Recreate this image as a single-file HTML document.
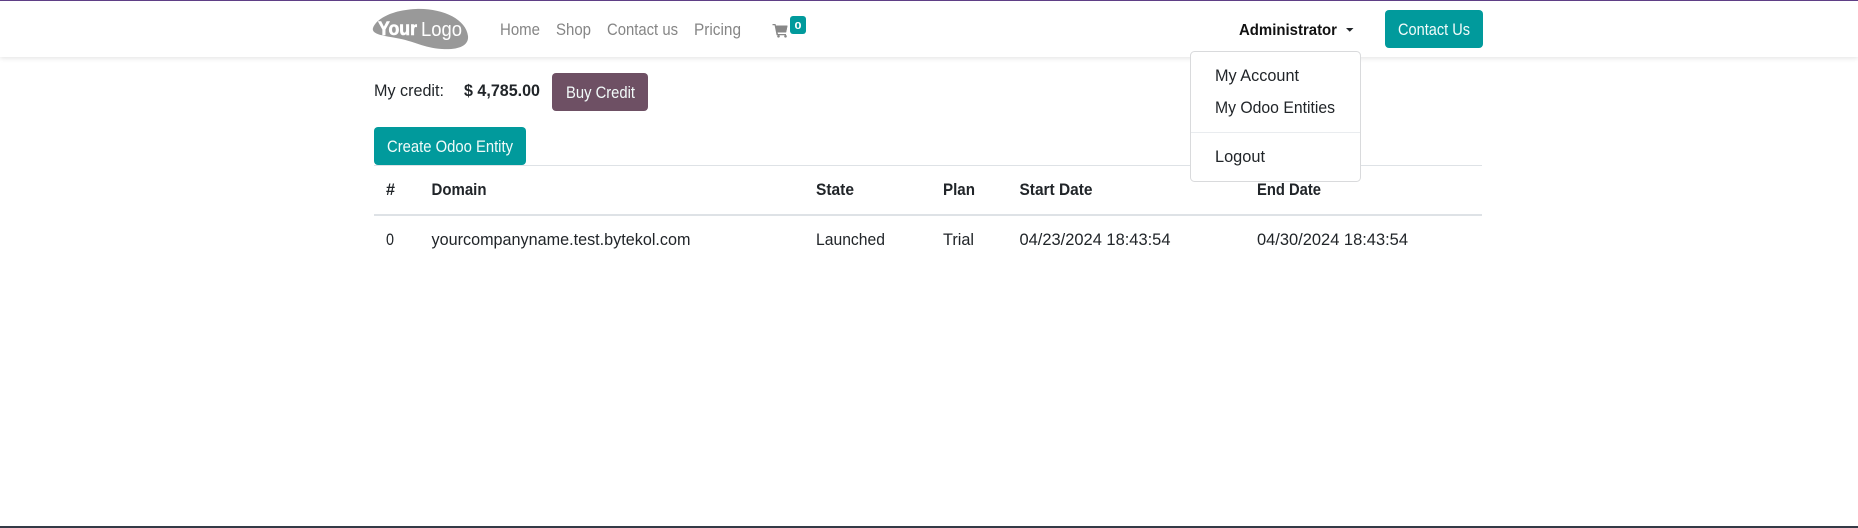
<!DOCTYPE html>
<html><head><meta charset="utf-8"><style>
html,body{margin:0;padding:0;background:#fff;width:1858px;height:528px;overflow:hidden}
svg{position:absolute;left:0;top:0;display:block}
.shadow{position:absolute;left:0;top:0;width:1858px;height:57px;background:#fff;box-shadow:0 1px 5px rgba(0,0,0,.12)}
text{font-family:"Liberation Sans",sans-serif;font-size:16.5px;fill:#212529}
.b{font-weight:700}
.n{fill:#858585;font-size:17px}
.w{fill:#f2fbfa;font-size:17px}
</style></head><body>
<div class="shadow"></div>
<svg width="1858" height="528" viewBox="0 0 1858 528" xmlns="http://www.w3.org/2000/svg">
<rect x="0" y="0" width="1858" height="1" fill="#5f3f86"/>
<rect x="0" y="526" width="1858" height="2" fill="#343a46"/>

<!-- logo -->
<path d="M373 28C376 19 392 10 416 9C442 8 466 19 468 36C469 46 458 50 442 49C424 48 414 41 396 38C384 36 371 34 373 28Z" fill="#999"/>
<text x="378" y="35" class="b" style="font-size:19px;fill:#fff;stroke:#fff;stroke-width:.6" textLength="39" lengthAdjust="spacingAndGlyphs">Your</text>
<text x="421" y="36" style="font-size:20px;fill:#fff" textLength="41" lengthAdjust="spacingAndGlyphs">Logo</text>

<!-- nav -->
<text x="500" y="35" class="n" textLength="40" lengthAdjust="spacingAndGlyphs">Home</text>
<text x="556" y="35" class="n" textLength="35" lengthAdjust="spacingAndGlyphs">Shop</text>
<text x="607" y="35" class="n" textLength="71" lengthAdjust="spacingAndGlyphs">Contact us</text>
<text x="694" y="35" class="n" textLength="47" lengthAdjust="spacingAndGlyphs">Pricing</text>
<!-- cart -->
<path d="M772.500 24h3l.6 2h11.400l-1.400 6.500h-8.500l.4 1.500h8v1.200h-9.400l-2-10h-2.100z" fill="#888"/>
<path d="M776 25.500h11.500l-1.300 6.500h-9z" fill="#888"/>
<circle cx="778.500" cy="36.300" r="1.300" fill="#888"/><circle cx="785.500" cy="36.300" r="1.300" fill="#888"/>
<rect x="790" y="16" width="16" height="18" rx="3" fill="#019a9c"/>
<text x="794.500" y="29" class="b" style="font-size:10.500px;fill:#fff" textLength="7" lengthAdjust="spacingAndGlyphs">0</text>

<!-- user -->
<text x="1239" y="35" class="b" style="font-size:15.500px;fill:#111" textLength="98" lengthAdjust="spacingAndGlyphs">Administrator</text>
<path d="M1346 28h7.500l-3.750 3.800z" fill="#212529"/>
<rect x="1385" y="10" width="98" height="38" rx="4" fill="#019a9c"/>
<text x="1398" y="35" class="w" textLength="72" lengthAdjust="spacingAndGlyphs">Contact Us</text>

<!-- credit -->
<text x="374" y="96" textLength="70" lengthAdjust="spacingAndGlyphs">My credit:</text>
<text x="464" y="96" class="b" textLength="76" lengthAdjust="spacingAndGlyphs">$ 4,785.00</text>
<rect x="552" y="73" width="96" height="38" rx="4" fill="#6e5064"/>
<text x="566" y="98" class="w" textLength="69" lengthAdjust="spacingAndGlyphs">Buy Credit</text>
<rect x="374" y="127" width="152" height="38" rx="4" fill="#019a9c"/>
<text x="387" y="152" class="w" textLength="126" lengthAdjust="spacingAndGlyphs">Create Odoo Entity</text>

<!-- table -->
<rect x="374" y="165" width="1108" height="1" fill="#dee2e6"/>
<rect x="374" y="214" width="1108" height="2" fill="#dee2e6"/>
<text x="386" y="195" class="b" textLength="9" lengthAdjust="spacingAndGlyphs">#</text>
<text x="431.500" y="195" class="b" textLength="55" lengthAdjust="spacingAndGlyphs">Domain</text>
<text x="816" y="195" class="b" textLength="38" lengthAdjust="spacingAndGlyphs">State</text>
<text x="943" y="195" class="b" textLength="32" lengthAdjust="spacingAndGlyphs">Plan</text>
<text x="1019.500" y="195" class="b" textLength="73" lengthAdjust="spacingAndGlyphs">Start Date</text>
<text x="1257" y="195" class="b" textLength="64" lengthAdjust="spacingAndGlyphs">End Date</text>
<text x="386" y="245" textLength="8" lengthAdjust="spacingAndGlyphs">0</text>
<text x="431.500" y="245" textLength="259" lengthAdjust="spacingAndGlyphs">yourcompanyname.test.bytekol.com</text>
<text x="816" y="245" textLength="69" lengthAdjust="spacingAndGlyphs">Launched</text>
<text x="943" y="245" textLength="31" lengthAdjust="spacingAndGlyphs">Trial</text>
<text x="1019.500" y="245" textLength="151" lengthAdjust="spacingAndGlyphs">04/23/2024 18:43:54</text>
<text x="1257" y="245" textLength="151" lengthAdjust="spacingAndGlyphs">04/30/2024 18:43:54</text>

<!-- dropdown -->
<rect x="1190.500" y="51.500" width="170" height="130" rx="4" fill="#fff" stroke="#d9dadc"/>
<rect x="1191" y="132" width="169" height="1" fill="#e9ecef"/>
<text x="1215" y="81" textLength="84" lengthAdjust="spacingAndGlyphs">My Account</text>
<text x="1215" y="113" textLength="120" lengthAdjust="spacingAndGlyphs">My Odoo Entities</text>
<text x="1215" y="162" textLength="50" lengthAdjust="spacingAndGlyphs">Logout</text>
</svg>
</body></html>
